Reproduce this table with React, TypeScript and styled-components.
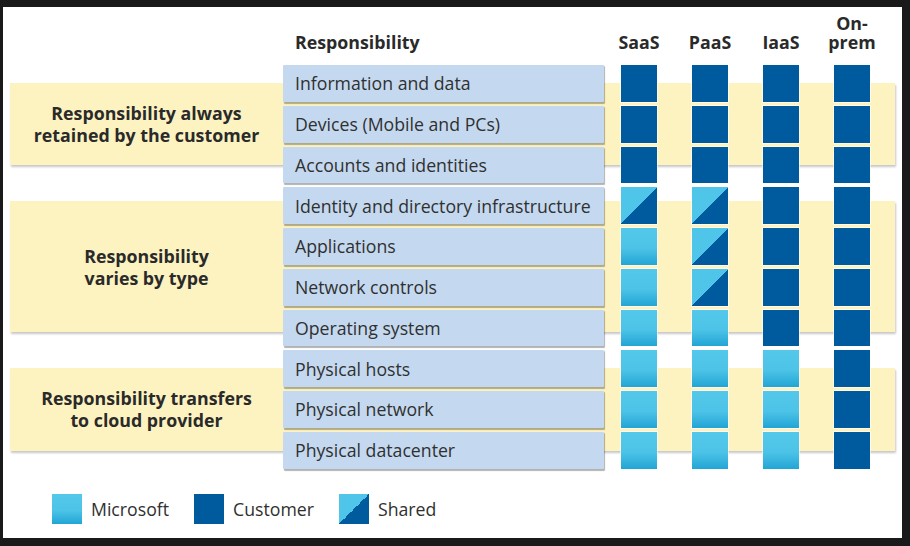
import React from "react";
import styled, { createGlobalStyle } from "styled-components";

const GlobalStyle = createGlobalStyle`
  html, body { margin: 0; padding: 0; background: #1a1a1a; }
  body { width: 910px; height: 546px; overflow: hidden; font-family: "Open Sans", "Noto Sans", sans-serif; }
  #root { padding: 7px 0 0 3px; }
`;

type Cell = "c" | "m" | "s";

const Panel = styled.div`
  width: 899px;
  height: 531px;
  background: #ffffff;
  box-sizing: border-box;
  padding: 0 7px;
  display: flex;
  flex-direction: column;
  color: #2a2a2a;
`;

const HeaderRow = styled.div`
  height: 58px;
  box-sizing: border-box;
  padding-bottom: 13px;
  display: flex;
  align-items: flex-end;
`;

const HeaderSpacer = styled.div`
  width: 273px;
  flex: none;
`;

const HeaderTitle = styled.div`
  width: 321px;
  flex: none;
  box-sizing: border-box;
  padding-left: 12px;
  font-weight: 700;
  font-size: 17.8px;
  line-height: 19px;
`;

const HeaderCols = styled.div`
  display: flex;
  gap: 35px;
  margin-left: 17px;
  align-items: flex-end;
`;

const ColHead = styled.div`
  width: 36px;
  display: flex;
  justify-content: center;
  text-align: center;
  white-space: pre;
  font-weight: 700;
  font-size: 17.8px;
  line-height: 19px;
`;

const Groups = styled.div`
  display: flex;
  flex-direction: column;
  gap: 4px;
`;

const Group = styled.div<{ $inset: number }>`
  position: relative;
  display: flex;
  width: 885px;
  &::before {
    content: "";
    position: absolute;
    left: 0;
    right: 0;
    top: ${(p) => p.$inset}px;
    bottom: ${(p) => p.$inset}px;
    background: #fdf3c1;
    box-shadow: 1px 2px 2px rgba(0, 0, 0, 0.22);
  }
`;

const BandLabel = styled.div`
  position: relative;
  width: 273px;
  flex: none;
  display: flex;
  align-items: center;
  justify-content: center;
  text-align: center;
  font-weight: 700;
  font-size: 17.8px;
  line-height: 22px;
  white-space: pre;
`;

const Rows = styled.div`
  position: relative;
  display: flex;
  flex-direction: column;
  gap: 4px;
`;

const Row = styled.div`
  display: flex;
  height: 36.75px;
`;

const RowLabel = styled.div`
  width: 321px;
  flex: none;
  box-sizing: border-box;
  padding-left: 12px;
  display: flex;
  align-items: center;
  background: #c4d9ef;
  box-shadow: 1px 1.5px 1px rgba(0, 0, 0, 0.3);
  border-radius: 1px;
  font-size: 17.7px;
  color: #303030;
`;

const Squares = styled.div`
  display: flex;
  gap: 35px;
  margin-left: 17px;
`;

const fills: Record<Cell, string> = {
  c: "#005a9e",
  m: "linear-gradient(to bottom, #54c8ea 0%, #4cc3e7 55%, #22a5d5 100%)",
  s: "linear-gradient(to bottom right, #4fc6e9 50%, #005a9e 50%)",
};

const Square = styled.div<{ $kind: Cell; $size?: number }>`
  width: ${(p) => p.$size ?? 36}px;
  height: ${(p) => (p.$size ? `${p.$size}px` : "100%")};
  flex: none;
  background: ${(p) => fills[p.$kind]};
  box-shadow: 0 0 0 1px rgba(255, 255, 255, 0.55);
`;

const Legend = styled.div`
  display: flex;
  align-items: center;
  margin-top: 25px;
  padding-left: 42px;
  gap: 25px;
`;

const LegendItem = styled.div`
  display: flex;
  align-items: center;
  gap: 9px;
  font-size: 17.7px;
  color: #303030;
`;

const groups: { label: string; inset: number; rows: { name: string; cells: Cell[] }[] }[] = [
  {
    label: "Responsibility always\nretained by the customer",
    inset: 18,
    rows: [
      { name: "Information and data", cells: ["c", "c", "c", "c"] },
      { name: "Devices (Mobile and PCs)", cells: ["c", "c", "c", "c"] },
      { name: "Accounts and identities", cells: ["c", "c", "c", "c"] },
    ],
  },
  {
    label: "Responsibility\nvaries by type",
    inset: 14,
    rows: [
      { name: "Identity and directory infrastructure", cells: ["s", "s", "c", "c"] },
      { name: "Applications", cells: ["m", "s", "c", "c"] },
      { name: "Network controls", cells: ["m", "s", "c", "c"] },
      { name: "Operating system", cells: ["m", "m", "c", "c"] },
    ],
  },
  {
    label: "Responsibility transfers\nto cloud provider",
    inset: 18,
    rows: [
      { name: "Physical hosts", cells: ["m", "m", "m", "c"] },
      { name: "Physical network", cells: ["m", "m", "m", "c"] },
      { name: "Physical datacenter", cells: ["m", "m", "m", "c"] },
    ],
  },
];

const cols = ["SaaS", "PaaS", "IaaS", "On-\nprem"];

export default function App() {
  return (
    <>
      <GlobalStyle />
      <Panel>
        <HeaderRow>
          <HeaderSpacer />
          <HeaderTitle>Responsibility</HeaderTitle>
          <HeaderCols>
            {cols.map((c) => (
              <ColHead key={c}>{c}</ColHead>
            ))}
          </HeaderCols>
        </HeaderRow>
        <Groups>
          {groups.map((g) => (
            <Group key={g.label} $inset={g.inset}>
              <BandLabel>{g.label}</BandLabel>
              <Rows>
                {g.rows.map((r) => (
                  <Row key={r.name}>
                    <RowLabel>{r.name}</RowLabel>
                    <Squares>
                      {r.cells.map((k, i) => (
                        <Square key={i} $kind={k} />
                      ))}
                    </Squares>
                  </Row>
                ))}
              </Rows>
            </Group>
          ))}
        </Groups>
        <Legend>
          <LegendItem>
            <Square $kind="m" $size={30} />
            Microsoft
          </LegendItem>
          <LegendItem>
            <Square $kind="c" $size={30} />
            Customer
          </LegendItem>
          <LegendItem>
            <Square $kind="s" $size={30} />
            Shared
          </LegendItem>
        </Legend>
      </Panel>
    </>
  );
}
